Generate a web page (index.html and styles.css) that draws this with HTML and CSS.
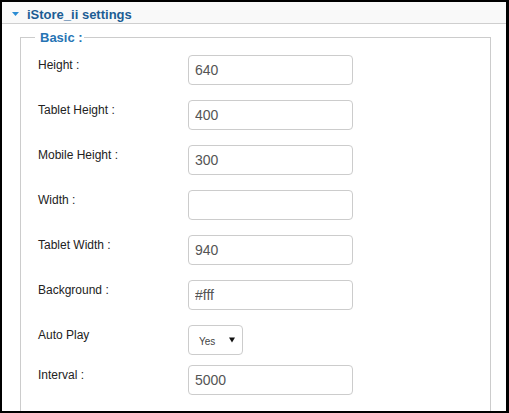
FILE: index.html
```html
<!DOCTYPE html>
<html>
<head>
<meta charset="utf-8">
<title>iStore_ii settings</title>
<link rel="stylesheet" href="styles.css">
</head>
<body>
<div class="frame">
  <div class="panel-head">
    <svg class="caret" width="7" height="4" viewBox="0 0 7 4"><polygon points="0,0 7,0 3.5,4" fill="#2b8cd3"/></svg>
    <span class="panel-title">iStore_ii settings</span>
  </div>
  <fieldset class="group">
    <legend class="group-title">Basic :</legend>
    <div class="row"><label class="lbl">Height :</label><input class="field" type="text" value="640"></div>
    <div class="row"><label class="lbl">Tablet Height :</label><input class="field" type="text" value="400"></div>
    <div class="row"><label class="lbl">Mobile Height :</label><input class="field" type="text" value="300"></div>
    <div class="row"><label class="lbl">Width :</label><input class="field" type="text" value=""></div>
    <div class="row"><label class="lbl">Tablet Width :</label><input class="field" type="text" value="940"></div>
    <div class="row"><label class="lbl">Background :</label><input class="field" type="text" value="#fff"></div>
    <div class="row row-tight"><label class="lbl">Auto Play</label>
      <div class="select"><span class="select-val">Yes</span><svg class="select-arrow" width="6" height="6" viewBox="0 0 6 6"><polygon points="0,0.5 6,0.5 3,5.5" fill="#111"/></svg></div>
    </div>
    <div class="row"><label class="lbl">Interval :</label><input class="field" type="text" value="5000"></div>
  </fieldset>
</div>
</body>
</html>
```
FILE: styles.css
```css
html, body {
  margin: 0;
  padding: 0;
  background: #fff;
}
.frame {
  box-sizing: border-box;
  width: 509px;
  height: 413px;
  border-style: solid;
  border-color: #000;
  border-width: 2px 3px 2px 2px;
  overflow: hidden;
  background: #fff;
  font-family: "Liberation Sans", Arial, sans-serif;
}
.panel-head {
  display: flex;
  align-items: center;
  height: 15px;
  padding: 5px 0 1px 8px;
  background: #f9f9f9;
  border-bottom: 1px solid #cfcfcf;
}
.caret {
  margin: 0 8px 0 2px;
  flex: none;
  position: relative;
  top: -1px;
}
.panel-title {
  font-size: 13px;
  line-height: 15px;
  font-weight: bold;
  color: #1c5d94;
}
.group {
  margin: 6px 15px 0 18px;
  padding: 10px 0 30px 17px;
  border: 1px solid #cccccc;
  border-bottom-width: 1px;
  min-width: 0;
}
.group-title {
  font-size: 13px;
  line-height: 15px;
  font-weight: bold;
  color: #2674b4;
  padding: 0 1px 0 5px;
  margin-left: -3px;
}
.row {
  display: flex;
  align-items: flex-start;
  margin-bottom: 15px;
}
.row-tight {
  margin-bottom: 10px;
}
.lbl {
  width: 150px;
  flex: none;
  font-size: 12px;
  line-height: 14px;
  color: #222;
  padding-top: 3px;
}
.field {
  box-sizing: border-box;
  width: 165px;
  height: 30px;
  margin: 0;
  padding: 0 6px;
  border: 1px solid #cccccc;
  border-radius: 4px;
  font-family: "Liberation Sans", Arial, sans-serif;
  font-size: 14px;
  color: #555;
  background: #fff;
  outline: none;
}
.select {
  box-sizing: border-box;
  width: 55px;
  height: 30px;
  display: flex;
  align-items: center;
  justify-content: space-between;
  padding: 0 7px 0 10px;
  border: 1px solid #cccccc;
  border-radius: 4px;
  background: #fff;
}
.select-val {
  font-size: 10px;
  color: #444;
  position: relative;
  top: 1px;
}
.select-arrow {
  flex: none;
}
```
